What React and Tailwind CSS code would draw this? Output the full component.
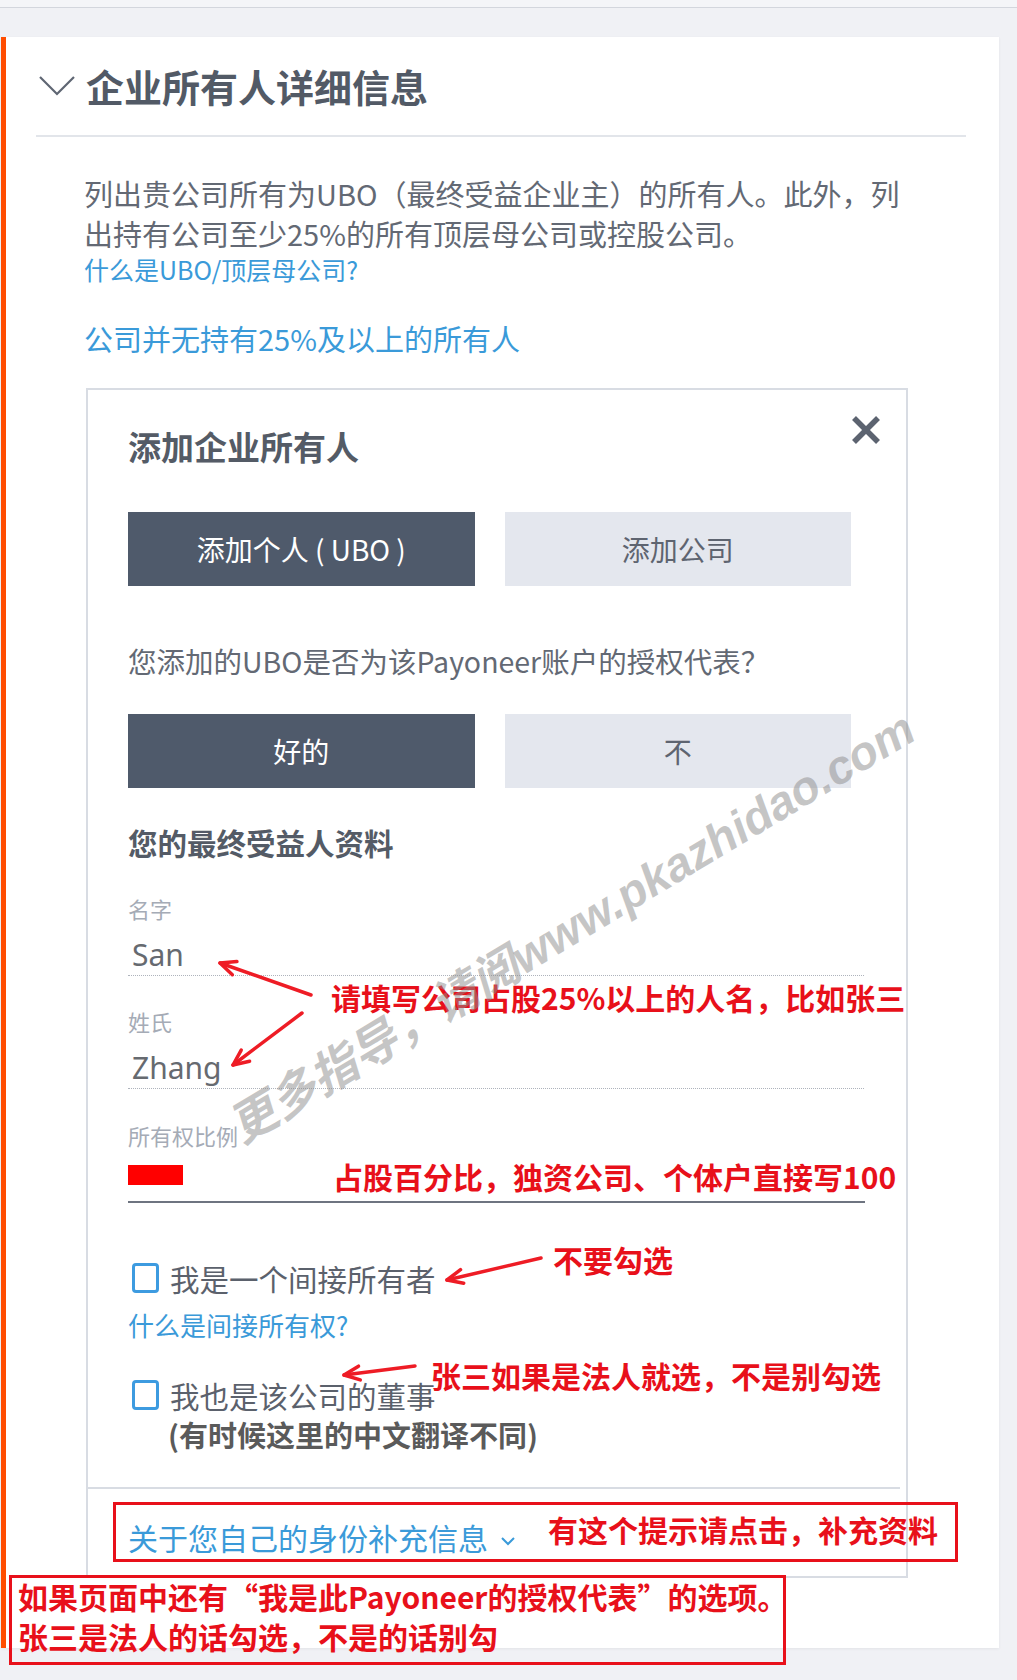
function Arrow({ x1, y1, x2, y2 }) {
  const a = Math.atan2(y1 - y2, x1 - x2);
  const l = 17;
  const s = 0.42;
  const p1 = [x2 + l * Math.cos(a + s), y2 + l * Math.sin(a + s)];
  const p2 = [x2 + l * Math.cos(a - s), y2 + l * Math.sin(a - s)];
  return (
    <g stroke="#ee1c25" strokeWidth="3.5" fill="none" strokeLinecap="round" strokeLinejoin="round">
      <line x1={x1} y1={y1} x2={x2} y2={y2} />
      <polyline points={`${p1[0]},${p1[1]} ${x2},${y2} ${p2[0]},${p2[1]}`} />
    </g>
  );
}

function Checkbox() {
  return <span className="block h-[30px] w-[27px] shrink-0 rounded-[4px] border-[3px] border-[#3d9be0]" />;
}

function Field({ label, value, mt }) {
  return (
    <>
      <div className={`${mt} text-[22px] leading-[30px] text-[#a5abb6]`}>{label}</div>
      <div className="mt-[12px] h-[41px] w-[736px] border-b border-dotted border-[#aeb3bc] pl-[4px] font-['Noto_Sans',sans-serif] text-[30px] leading-[40px] text-[#666a70]">
        {value}
      </div>
    </>
  );
}

export default function App() {
  return (
    <div className="relative h-[1680px] w-[1017px] overflow-hidden bg-[#f0f1f5] font-['Noto_Sans_CJK_SC',sans-serif]">
      <div className="h-[7px] bg-[#f4f5f8]" />
      <div className="h-px bg-[#d3d6dd]" />
      <div className="h-[29px]" />

      <section className="ml-px h-[1611px] w-[998px] border-l-[5px] border-[#ff4d00] bg-white shadow-[0_1px_3px_rgba(0,0,0,0.06)]">
        <header className="flex items-center pl-[33px] pt-[27px]">
          <svg width="36" height="20" viewBox="0 0 36 20" fill="none" stroke="#5f6673" strokeWidth="2.2">
            <polyline points="1,1 18,18 35,1" />
          </svg>
          <h1 className="ml-[11px] text-[38px] font-bold leading-[44px] text-[#525a66]">企业所有人详细信息</h1>
        </header>
        <div className="ml-[30px] mt-[27px] h-[2px] w-[930px] bg-[#e2e5ea]" />

        <p className="mt-[36px] pl-[78px] text-[29px] leading-[40px] text-[#636974]">
          列出贵公司所有为UBO（最终受益企业主）的所有人。此外，列
          <br />
          出持有公司至少25%的所有顶层母公司或控股公司。
        </p>
        <div className="mt-px pl-[78px] text-[25px] leading-[30px] text-[#3a9ad9]">什么是UBO/顶层母公司?</div>
        <div className="mt-[34px] pl-[78px] text-[29px] leading-[40px] text-[#3a9ad9]">公司并无持有25%及以上的所有人</div>

        <div className="ml-[80px] mt-[30px] w-[822px] border-2 border-[#d8dce3]">
          <div className="pl-[40px] pr-[55px] pt-[36px] pb-[19px]">
            <div className="flex items-start justify-between">
              <h2 className="text-[33px] font-bold leading-[40px] text-[#545b66]">添加企业所有人</h2>
              <svg className="-mr-[30px] -mt-[11px]" width="30" height="30" viewBox="0 0 30 30" stroke="#5c6370" strokeWidth="5.5">
                <line x1="3" y1="3" x2="27" y2="27" />
                <line x1="27" y1="3" x2="3" y2="27" />
              </svg>
            </div>

            <div className="mt-[46px] grid grid-cols-2 gap-[30px] text-[28px]">
              <div className="flex h-[74px] items-center justify-center whitespace-pre bg-[#4f5a6b] text-white">添加个人 ( UBO )</div>
              <div className="flex h-[74px] items-center justify-center bg-[#e4e7ee] text-[#5e6470]">添加公司</div>
            </div>

            <div className="mt-[55px] text-[28.5px] leading-[40px] text-[#636974]">您添加的UBO是否为该Payoneer账户的授权代表？</div>

            <div className="mt-[33px] grid grid-cols-2 gap-[30px] text-[28px]">
              <div className="flex h-[74px] items-center justify-center bg-[#4f5a6b] text-white">好的</div>
              <div className="flex h-[74px] items-center justify-center bg-[#e4e7ee] text-[#5e6470]">不</div>
            </div>

            <h3 className="mt-[34px] text-[29.5px] font-bold leading-[40px] text-[#545b66]">您的最终受益人资料</h3>

            <Field mt="mt-[31px]" label="名字" value="San" />
            <Field mt="mt-[30px]" label="姓氏" value="Zhang" />

            <div className="mt-[31px] text-[22px] leading-[30px] text-[#a5abb6]">所有权比例</div>
            <div className="mt-[11px] h-[42px] w-[737px] border-b-2 border-[#6e7480] pt-[4px]">
              <div className="h-[20px] w-[55px] bg-[#ff0000]" />
            </div>

            <div className="mt-[55px] flex items-center gap-[11px] pl-[4px]">
              <Checkbox />
              <span className="text-[29.5px] leading-[40px] text-[#5b616c]">我是一个间接所有者</span>
            </div>
            <div className="mt-[12px] text-[26px] leading-[30px] text-[#3a9ad9]">什么是间接所有权?</div>
            <div className="mt-[35px] flex items-center gap-[11px] pl-[4px]">
              <Checkbox />
              <span className="text-[29.5px] leading-[40px] text-[#5b616c]">我也是该公司的董事</span>
            </div>
            <div className="-mt-px pl-[40px] text-[29px] font-bold leading-[40px] text-[#5a5a5a]">(有时候这里的中文翻译不同)</div>

            <div className="-ml-[40px] mt-[33px] h-[2px] w-[812px] bg-[#d8dce3]" />

            <div className="mt-[28px] flex items-center text-[30px] leading-[40px] text-[#3a9ad9]">
              关于您自己的身份补充信息
              <svg className="ml-[12px] mt-[8px]" width="16" height="10" viewBox="0 0 16 10" fill="none" stroke="#3a9ad9" strokeWidth="2">
                <polyline points="2,2 8,8 14,2" />
              </svg>
            </div>
          </div>
        </div>
      </section>

      {/* annotations */}
      <svg className="pointer-events-none absolute left-0 top-0" width="1017" height="1680">
        <Arrow x1={311} y1={995} x2={220} y2={963} />
        <Arrow x1={302} y1={1013} x2={233} y2={1065} />
        <Arrow x1={541} y1={1258} x2={447} y2={1280} />
        <Arrow x1={415} y1={1366} x2={344} y2={1375} />
      </svg>

      <div className="absolute left-[331px] top-[982px] whitespace-nowrap text-[30px] font-bold leading-[30px] text-[#e8101a]">请填写公司占股25%以上的人名，比如张三</div>
      <div className="absolute left-[333px] top-[1161px] whitespace-nowrap text-[30px] font-bold leading-[30px] text-[#e8101a]">占股百分比，独资公司、个体户直接写100</div>
      <div className="absolute left-[553px] top-[1244px] whitespace-nowrap text-[30px] font-bold leading-[30px] text-[#e8101a]">不要勾选</div>
      <div className="absolute left-[431px] top-[1360px] whitespace-nowrap text-[30px] font-bold leading-[30px] text-[#e8101a]">张三如果是法人就选，不是别勾选</div>

      <div className="absolute left-[113px] top-[1502px] h-[60px] w-[845px] border-[3px] border-[#e8101a]" />
      <div className="absolute left-[548px] top-[1514px] whitespace-nowrap text-[30px] font-bold leading-[30px] text-[#e8101a]">有这个提示请点击，补充资料</div>

      <div className="absolute left-[9px] top-[1575px] h-[90px] w-[777px] border-[3px] border-[#e8101a] pl-[6px] text-[30px] font-bold leading-[40px] text-[#e8101a]">
        <div className="-mt-[2px] whitespace-nowrap">如果页面中还有“我是此Payoneer的授权代表”的选项。</div>
        <div className="whitespace-nowrap">张三是法人的话勾选，不是的话别勾</div>
      </div>

      <div className="pointer-events-none absolute left-[572px] top-[928px] -translate-x-1/2 -translate-y-1/2 -rotate-[31deg] whitespace-nowrap font-['Liberation_Sans','Noto_Sans_CJK_SC',sans-serif] text-[47px] font-bold italic text-[rgba(140,140,140,0.5)]">
        更多指导，请阅www.pkazhidao.com
      </div>
    </div>
  );
}
